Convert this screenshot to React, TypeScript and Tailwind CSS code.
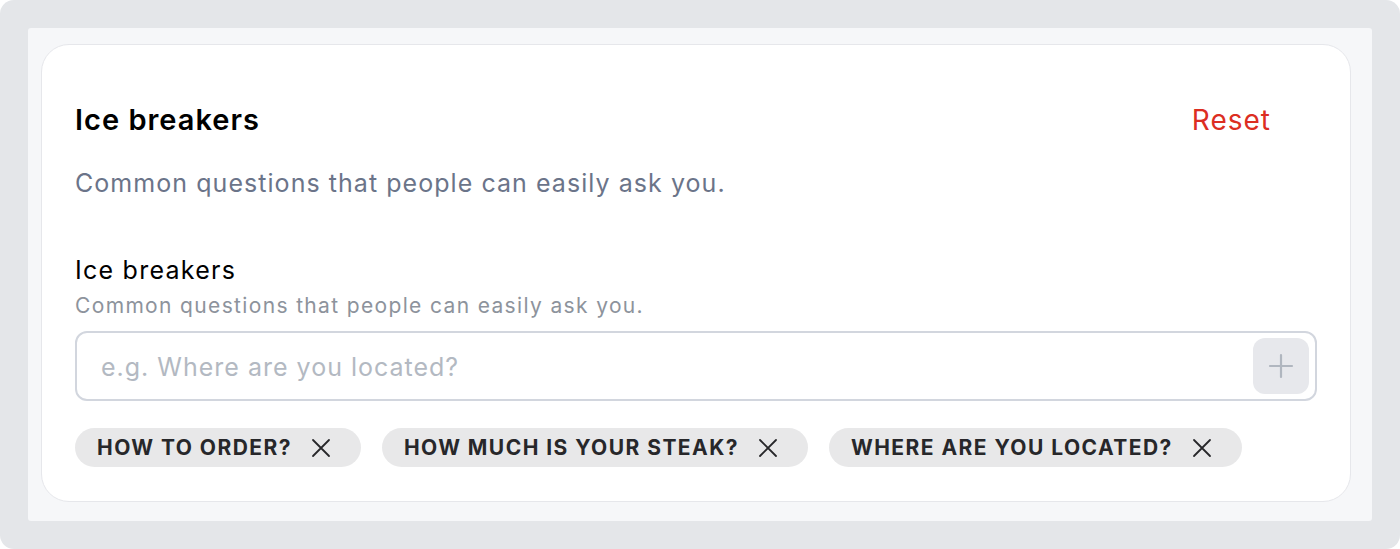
import React from "react";

function XIcon() {
  return (
    <svg width="20" height="20" viewBox="0 0 20 20" fill="none" stroke="#27272a" strokeWidth="1.8" strokeLinecap="round">
      <path d="M2 2L18 18M18 2L2 18" />
    </svg>
  );
}

function Chip({ label }: { label: string }) {
  return (
    <div className="flex h-[39px] items-center gap-[19px] rounded-full bg-[#e8e8e9] pl-[22px] pr-[30px]">
      <span className="text-[21px] font-bold tracking-[1.45px] text-[#27272a]">{label}</span>
      <XIcon />
    </div>
  );
}

export default function App() {
  return (
    <div className="h-[549px] w-[1400px] bg-white" style={{ fontFamily: "Inter, 'Noto Sans', sans-serif" }}>
      <div className="h-full w-full rounded-[14px] bg-[#e4e6e9] p-[28px]">
        <div className="h-[493px] w-[1344px] rounded-[3px] bg-[#f6f7f9] pl-[13px] pt-[16px]">
          <div className="h-[458px] w-[1310px] rounded-[28px] border border-[#e6e7eb] bg-white px-[33px] pt-[58px]">
            <div className="flex items-center justify-between">
              <h1 className="text-[29px] font-semibold leading-[34px] tracking-[1px] text-black">Ice breakers</h1>
              <button className="mr-[46px] text-[28px] leading-[34px] tracking-[1px] text-[#dc2e22]">Reset</button>
            </div>
            <p className="mt-[30px] text-[25px] leading-[32px] tracking-[1.05px] text-[#6b7489]">
              Common questions that people can easily ask you.
            </p>
            <div className="mt-[55px] text-[25px] leading-[32px] tracking-[1.25px] text-black">Ice breakers</div>
            <div className="mt-[6px] text-[21px] leading-[28px] tracking-[1.35px] text-[#8d939c]">
              Common questions that people can easily ask you.
            </div>
            <div className="mt-[11px] flex h-[70px] items-center rounded-[12px] border-2 border-[#d2d6de] pl-[24px] pr-[6px]">
              <span className="flex-1 pt-[3px] text-[25px] tracking-[1px] text-[#b3b9c2]">e.g. Where are you located?</span>
              <div className="flex h-[56px] w-[56px] items-center justify-center rounded-[12px] bg-[#e7e8ec]">
                <svg width="26" height="26" viewBox="0 0 26 26" fill="none" stroke="#b0b6bf" strokeWidth="2.2" strokeLinecap="round">
                  <path d="M13 2V24M2 13H24" />
                </svg>
              </div>
            </div>
            <div className="mt-[27px] flex gap-[21px]">
              <Chip label="HOW TO ORDER?" />
              <Chip label="HOW MUCH IS YOUR STEAK?" />
              <Chip label="WHERE ARE YOU LOCATED?" />
            </div>
          </div>
        </div>
      </div>
    </div>
  );
}
